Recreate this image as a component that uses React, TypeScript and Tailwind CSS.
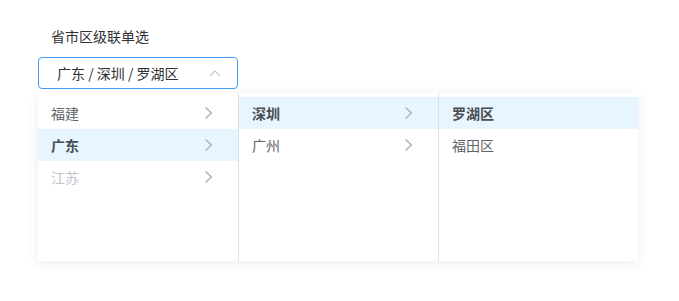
import React from "react";

const font = { fontFamily: '"Noto Sans CJK SC", "Noto Sans", sans-serif' };

function Chevron() {
  return (
    <svg width="9" height="14" viewBox="0 0 9 14" className="shrink-0">
      <path d="M1.5 1.5 L7.5 7 L1.5 12.5" fill="none" stroke="#a3a6ad" strokeWidth="1.1" />
    </svg>
  );
}

type Item = { label: string; active?: boolean; disabled?: boolean; arrow?: boolean };

function Column({ items, first }: { items: Item[]; first?: boolean }) {
  return (
    <div className={`w-[200px] h-[168px] py-[4px] ${first ? "" : "border-l border-[#dcdfe6]"}`}>
      {items.map((it) => (
        <div
          key={it.label}
          className={`h-[32px] flex items-center justify-between pl-[13px] pr-[25px] text-[14px] ${
            it.active ? "bg-[#e6f5fe] font-bold text-[#4a4d52]" : it.disabled ? "text-[#c0c4cc]" : "text-[#606266]"
          }`}
        >
          <span>{it.label}</span>
          {it.arrow && <Chevron />}
        </div>
      ))}
    </div>
  );
}

export default function App() {
  return (
    <div className="w-[679px] h-[301px] bg-white px-[38px] pt-[26px] antialiased" style={font}>
      <div className="ml-[13px] text-[14px] text-[#303133] leading-[20px]">省市区级联单选</div>
      <div className="relative mt-[11px]">
        <div className="w-[200px] h-[32px] border border-[#409eff] rounded-[4px] flex items-center justify-between pl-[18px] pr-[16px]">
          <span className="text-[14px] text-[#303133]">广东 / 深圳 / 罗湖区</span>
          <svg width="12" height="7" viewBox="0 0 12 7">
            <path d="M1 6 L6 1 L11 6" fill="none" stroke="#c0c4cc" strokeWidth="1.1" />
          </svg>
        </div>
        <div className="absolute left-0 top-[36px] flex bg-white shadow-[0_2px_12px_rgba(0,0,0,0.08)]">
          <Column
            first
            items={[
              { label: "福建", arrow: true },
              { label: "广东", arrow: true, active: true },
              { label: "江苏", arrow: true, disabled: true },
            ]}
          />
          <Column
            items={[
              { label: "深圳", arrow: true, active: true },
              { label: "广州", arrow: true },
            ]}
          />
          <Column items={[{ label: "罗湖区", active: true }, { label: "福田区" }]} />
        </div>
      </div>
    </div>
  );
}
